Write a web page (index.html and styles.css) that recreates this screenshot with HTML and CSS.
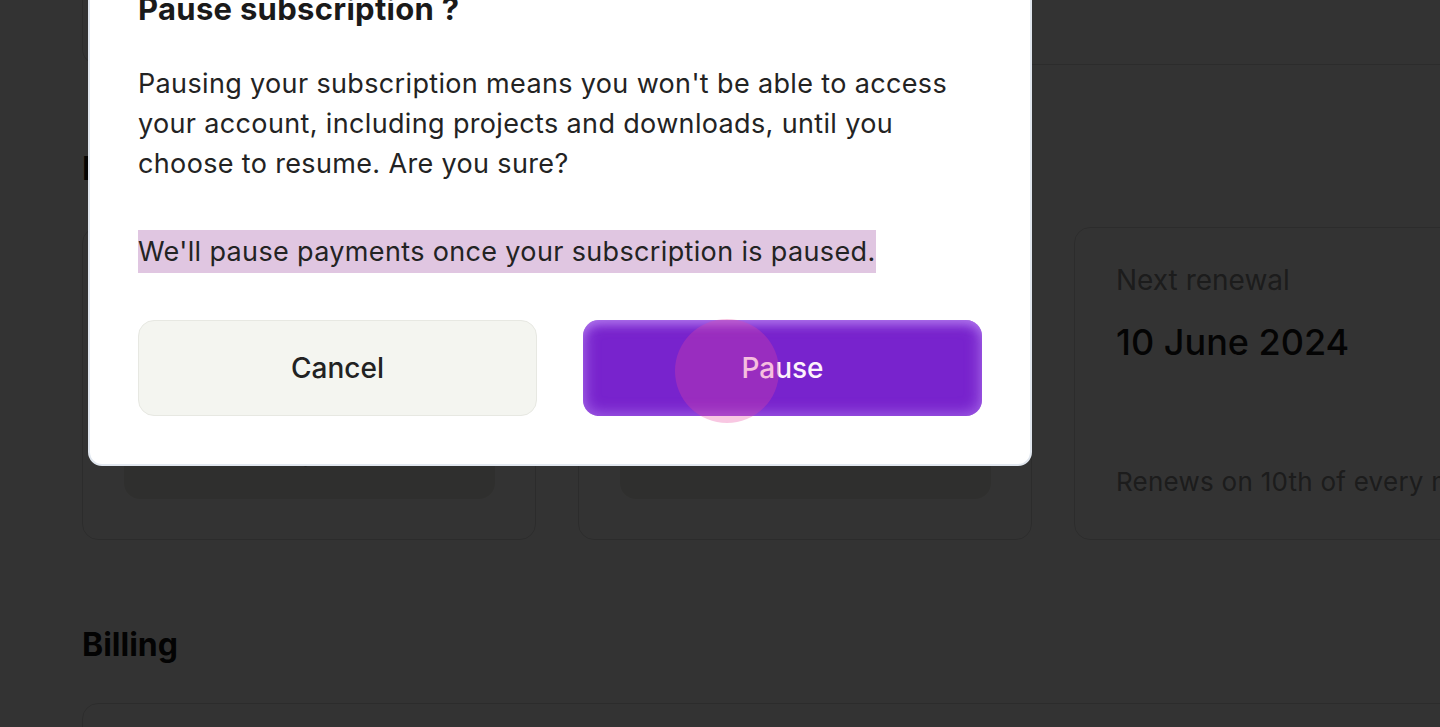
FILE: index.html
```html
<!DOCTYPE html>
<html>
	<head>
		<meta charset="utf-8">
		<title>Subscription</title>
		<link rel="stylesheet" href="styles.css">
	</head>
	<body>
		<div class="page">
			<div class="top_card"></div>
			<h2 class="section_title">Plan</h2>
			<div class="card_row">
				<div class="card">
					<p class="card_label">Current plan</p>
					<p class="card_value">Pro</p>
					<button class="card_btn" type="button">Manage plan</button>
				</div>
				<div class="card">
					<p class="card_label">Monthly cost</p>
					<p class="card_value">$24</p>
					<button class="card_btn" type="button">Pause subscription</button>
				</div>
				<div class="card">
					<p class="card_label">Next renewal</p>
					<p class="card_value">10 June 2024</p>
					<p class="card_foot">Renews on 10th of every month</p>
				</div>
			</div>
			<h2 class="section_title billing">Billing</h2>
			<div class="card billing_card"></div>
		</div>

		<div class="overlay"></div>

		<div class="modal">
			<h3 class="modal_title">Pause subscription ?</h3>
			<p class="modal_text">Pausing your subscription means you won't be able to access your account, including projects and downloads, until you choose to resume. Are you sure?</p>
			<p class="modal_text"><span class="selected">We'll pause payments once your subscription is paused.</span></p>
			<div class="modal_btns">
				<button class="btn_cancel" type="button">Cancel</button>
				<button class="btn_pause" type="button">Pause</button>
			</div>
		</div>

		<div class="click_dot"></div>
	</body>
</html>
```

FILE: styles.css
```css
body {
    margin: 0;
    overflow: hidden;
    background: #fff;
    font-family: Inter, "Noto Sans", sans-serif;
    color: #1d1d1d;
}
* {
    box-sizing: border-box;
}
p {
    margin: 0;
}
.page {
    width: 1528px;
    padding-left: 82px;
}
.top_card {
    height: 65px;
    border: 1px solid #dcdcdc;
    border-top: none;
    border-radius: 0 0 16px 16px;
}
.section_title {
    margin: 84px 0 38px;
    font-size: 32px;
    line-height: 40px;
    font-weight: 700;
    color: #111;
}
.section_title.billing {
    margin: 85px 0 38px;
}
.card_row {
    display: grid;
    grid-template-columns: repeat(3, 454px);
    gap: 42px;
}
.card {
    height: 313px;
    padding: 32px 40px 40px 41px;
    border: 1px solid #dcdcdc;
    border-radius: 16px;
    display: flex;
    flex-direction: column;
}
.card_label {
    font-size: 28px;
    line-height: 40px;
    color: #8a8a8a;
}
.card_value {
    margin-top: 20px;
    font-size: 36px;
    line-height: 44px;
    font-weight: 500;
    color: #151515;
}
.card_foot {
    margin-top: auto;
    font-size: 26px;
    line-height: 34px;
    letter-spacing: 0.25px;
    color: #8a8a8a;
    white-space: nowrap;
}
.card_btn {
    margin-top: auto;
    height: 80px;
    padding-bottom: 16px;
    border: none;
    border-radius: 16px;
    background: #ececE4;
    font-family: inherit;
    font-size: 26px;
    font-weight: 500;
    color: #222;
}
.billing_card {
    height: 200px;
}
.overlay {
    position: fixed;
    top: 0;
    left: 0;
    right: 0;
    bottom: 0;
    background: rgba(0, 0, 0, 0.8);
}
.modal {
    position: fixed;
    left: 88px;
    bottom: 261px;
    width: 944px;
    padding: 48px;
    background: #fff;
    border: 2px solid #e1e7ef;
    border-radius: 14px;
}
.modal_title {
    margin: 0 0 35px;
    font-size: 31px;
    line-height: 40px;
    font-weight: 700;
    letter-spacing: 0.3px;
    color: #1a1a1a;
}
.modal_text {
    max-width: 840px;
    font-size: 27px;
    line-height: 40px;
    letter-spacing: 0.35px;
    color: #232323;
}
.modal_text + .modal_text {
    margin-top: 48px;
}
.selected {
    background: #e0c6e1;
    padding: 5px 0;
}
.modal_btns {
    margin-top: 48px;
    display: grid;
    grid-template-columns: 1fr 1fr;
    gap: 46px;
}
.modal_btns button {
    height: 96px;
    border-radius: 16px;
    font-family: inherit;
    font-size: 28px;
    font-weight: 500;
}
.btn_cancel {
    background: #f4f5f0;
    border: 1px solid #e7e8e2;
    color: #222;
}
.btn_pause {
    background: #7823cd;
    border: none;
    color: #fdf2fb;
    box-shadow: inset 0 0 14px 3px rgba(190, 140, 245, 0.55), inset 0 8px 10px -4px rgba(200, 150, 250, 0.5);
}
.click_dot {
    position: fixed;
    left: 675px;
    top: 319px;
    width: 104px;
    height: 104px;
    border-radius: 50%;
    background: rgba(232, 70, 160, 0.3);
}
```
